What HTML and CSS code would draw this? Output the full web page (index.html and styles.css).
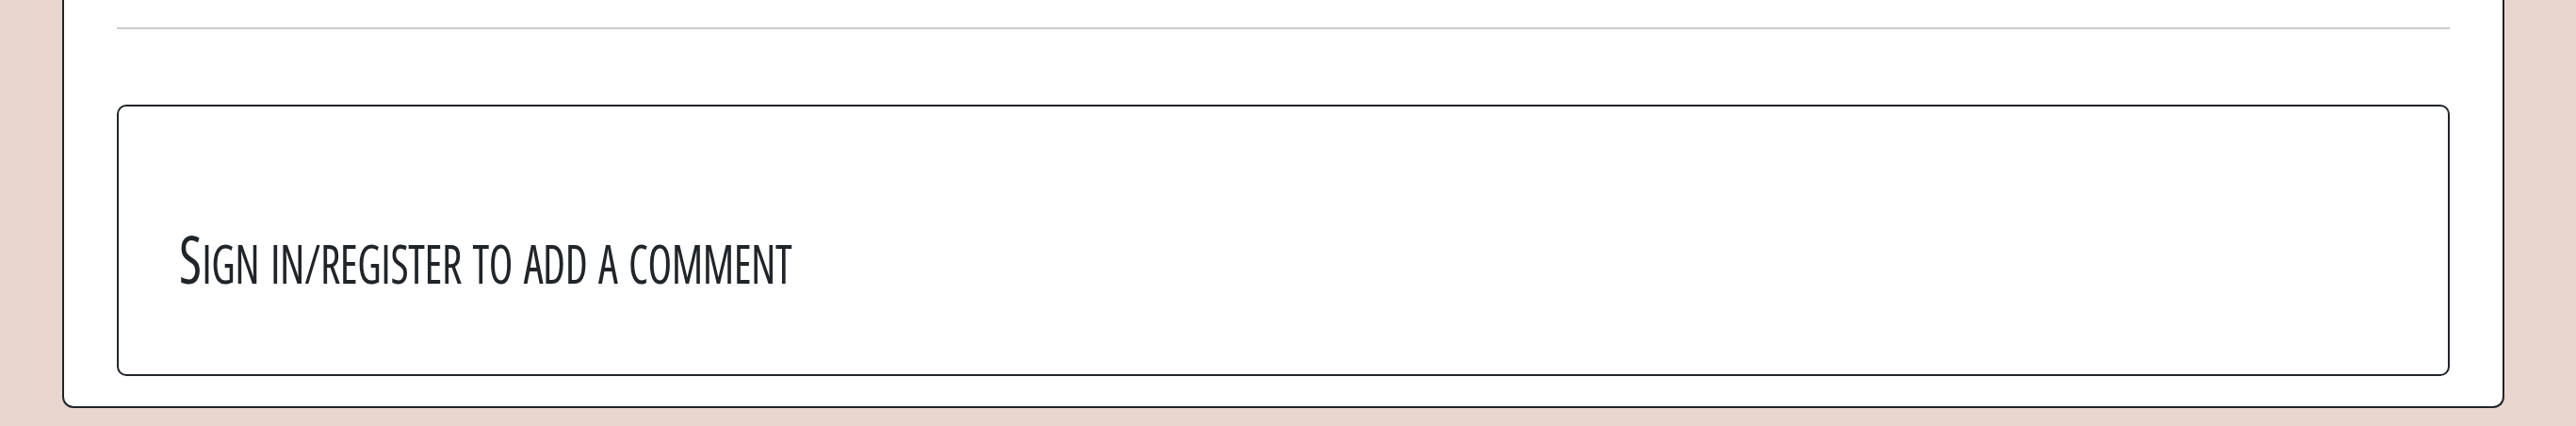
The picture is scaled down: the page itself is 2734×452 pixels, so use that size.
FILE: index.html
```html
<!DOCTYPE html>
<html lang="en">
<head>
<meta charset="utf-8">
<title>Comments</title>
<link rel="stylesheet" href="styles.css">
</head>
<body>
<main class="card">
  <hr class="divider">
  <section class="comment-box">
    <a class="signin" href="#"><span class="initial">S</span><span class="rest">ign in/register to add a comment</span></a>
  </section>
</main>
</body>
</html>
```
FILE: styles.css
```css
html, body {
  margin: 0;
  padding: 0;
}
body {
  background: #e9d6cf;
  font-family: "Open Sans", "DejaVu Sans", sans-serif;
  color: #212529;
}
.card {
  box-sizing: border-box;
  margin: 0 76px 0 66px;
  background: #fff;
  border: 2px solid #212529;
  border-top: none;
  border-radius: 0 0 12px 12px;
  padding: 29px 56px 32px;
}
.divider {
  margin: 0;
  height: 2px;
  border: 0;
  background: #cbcbcb;
}
.comment-box {
  margin-top: 80px;
  border: 2px solid #212529;
  border-radius: 10px;
  padding: 126px 64px 88px;
}
.signin {
  display: block;
  font-size: 70px;
  line-height: 70px;
  font-weight: 500;
  font-stretch: 75%;
  color: #212529;
  text-decoration: none;
  white-space: nowrap;
  transform: scaleX(0.84);
  transform-origin: left center;
}
.rest {
  font-size: 56px;
  line-height: 56px;
  text-transform: uppercase;
  letter-spacing: -0.5px;
  word-spacing: 4px;
}
```
